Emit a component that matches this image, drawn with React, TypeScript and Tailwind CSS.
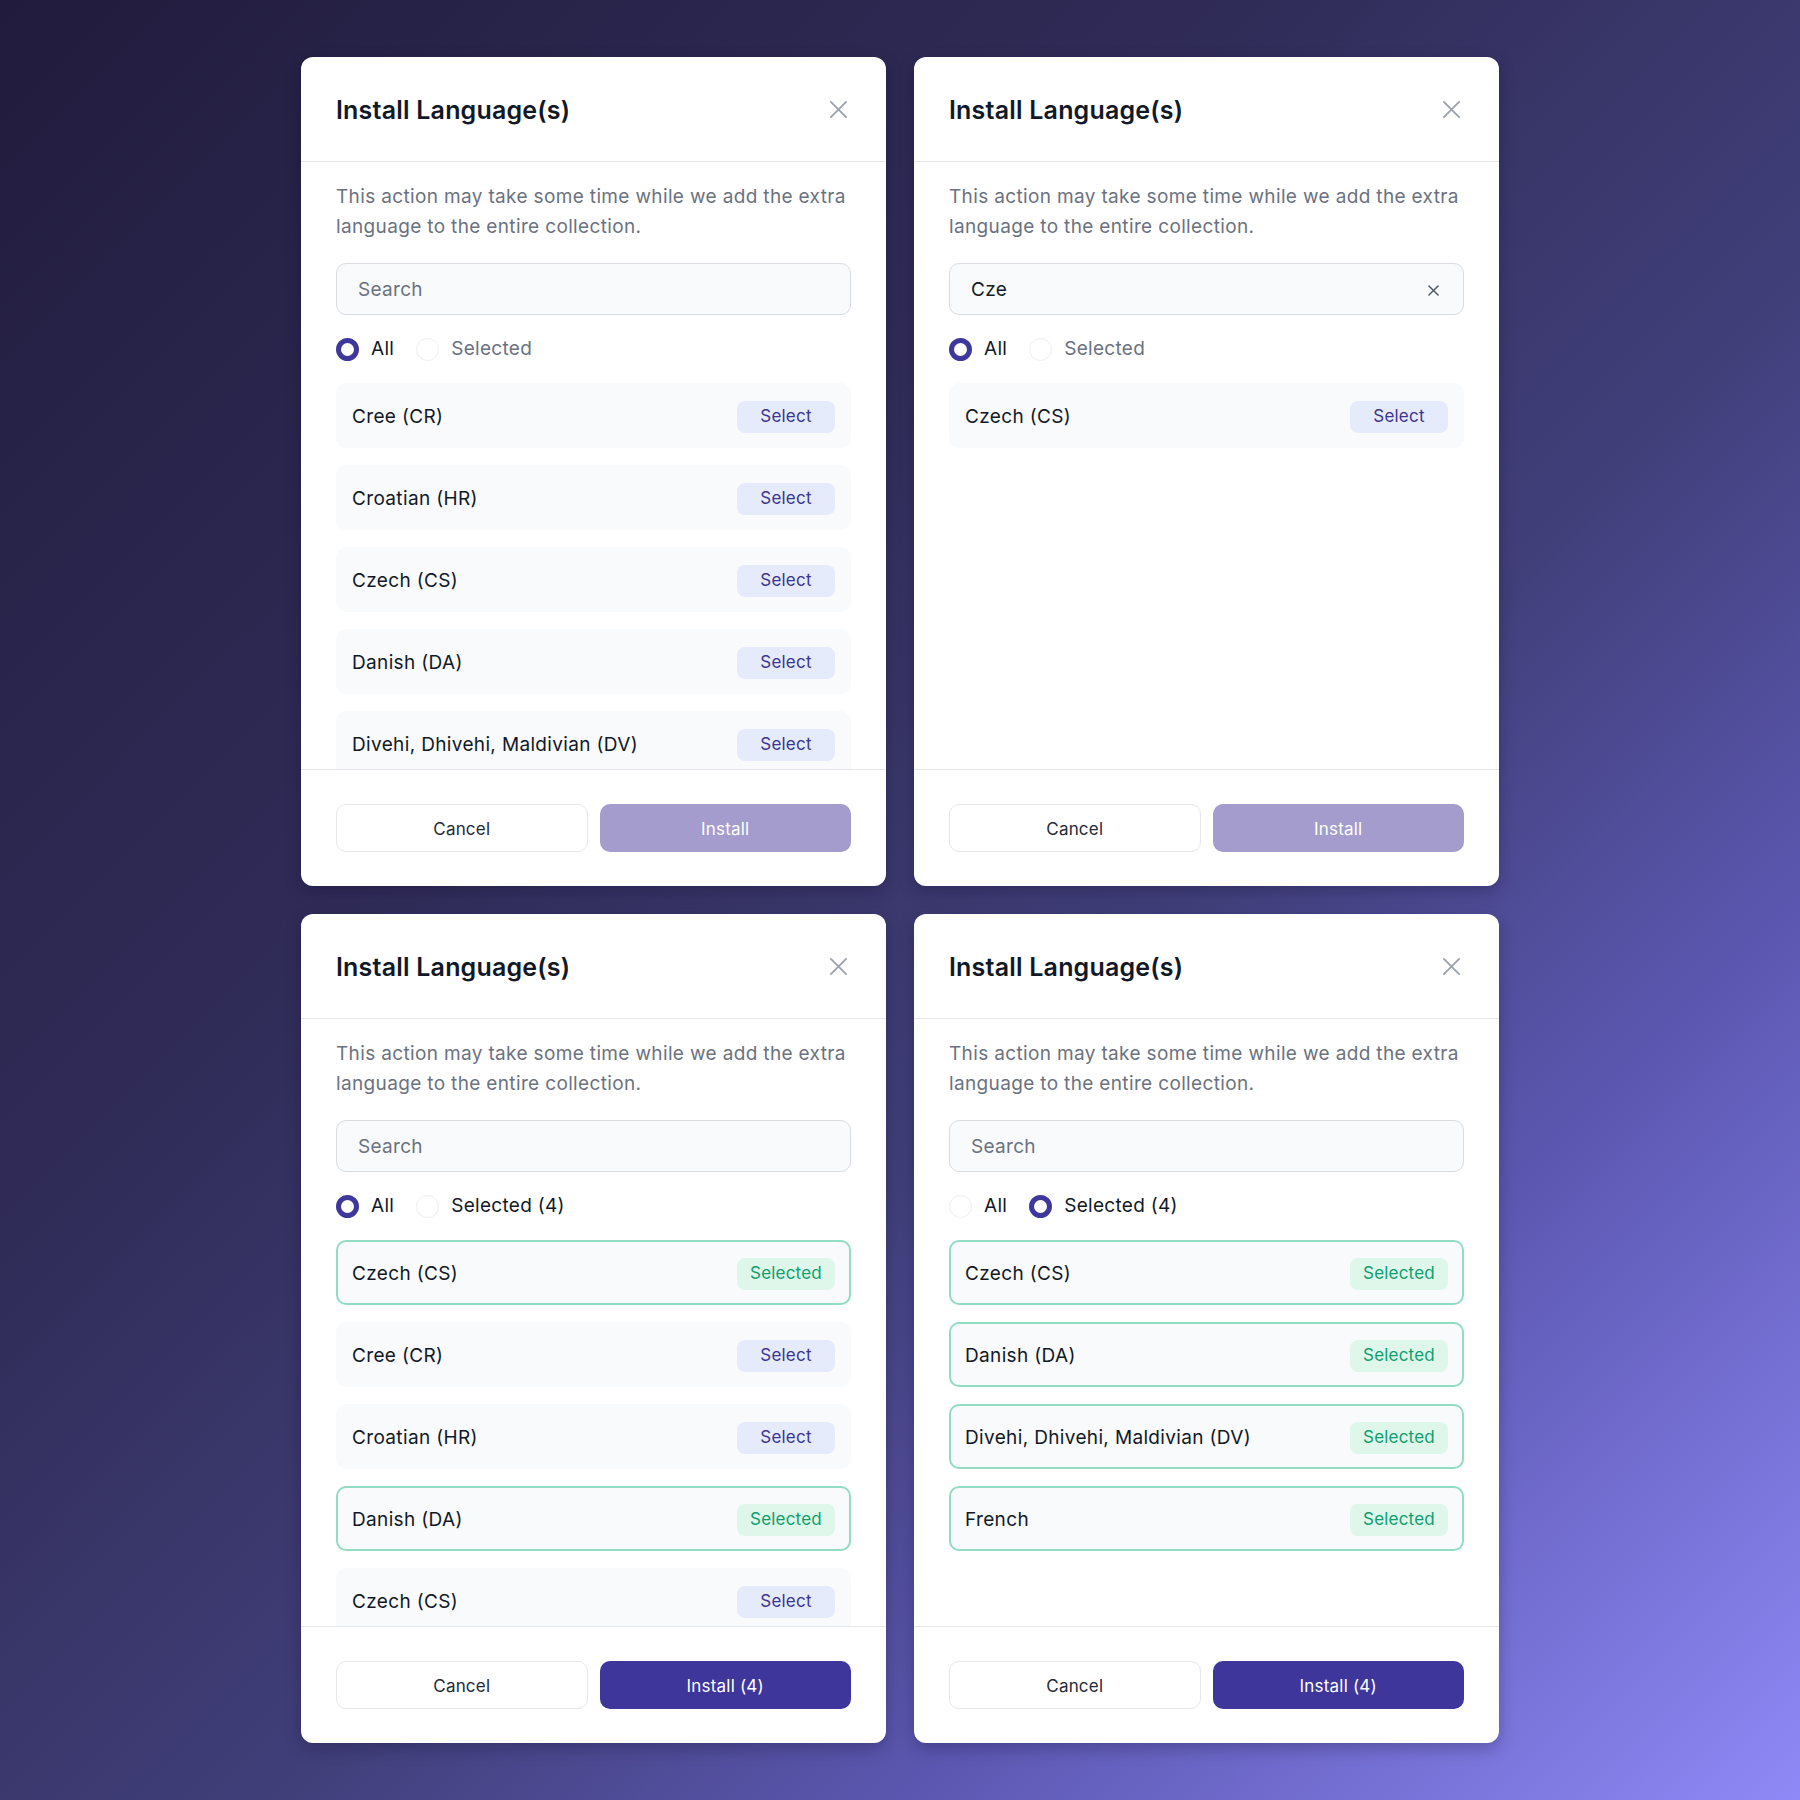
import React from "react";

type Item = { name: string; selected?: boolean };

function Radio({ checked, label, muted }: { checked: boolean; label: string; muted?: boolean }) {
  return (
    <div className="flex items-center gap-[12px]">
      {checked ? (
        <span className="w-[23px] h-[23px] rounded-full border-[5px] border-[#3f389c] bg-white" />
      ) : (
        <span className="w-[23px] h-[23px] rounded-full border border-[#eceef2] bg-white" />
      )}
      <span className={"text-[19px] leading-[24px] tracking-[0.3px] " + (muted ? "text-[#6b7280]" : "text-[#111827]")}>{label}</span>
    </div>
  );
}

function Row({ item }: { item: Item }) {
  return (
    <div
      className={
        "shrink-0 h-[65px] rounded-[10px] bg-[#f8fafc] border-2 px-[14px] pt-[3px] flex items-center justify-between " +
        (item.selected ? "border-[#92dcc2]" : "border-transparent")
      }
    >
      <span className="text-[19px] tracking-[0.35px] text-[#111827]">{item.name}</span>
      {item.selected ? (
        <span className="w-[98px] h-[32px] rounded-[8px] bg-[#def7ea] text-[#0f9f6e] text-[17px] tracking-[0.2px] flex items-center justify-center">
          Selected
        </span>
      ) : (
        <span className="w-[98px] h-[32px] rounded-[8px] bg-[#e6ebfc] text-[#3b358f] text-[17px] tracking-[0.2px] flex items-center justify-center">
          Select
        </span>
      )}
    </div>
  );
}

function Card({
  query,
  allChecked,
  selectedLabel,
  selectedMuted,
  items,
  installLabel,
  enabled,
}: {
  query?: string;
  allChecked: boolean;
  selectedLabel: string;
  selectedMuted: boolean;
  items: Item[];
  installLabel: string;
  enabled: boolean;
}) {
  return (
    <div className="h-[829px] rounded-[12px] bg-white flex flex-col overflow-hidden shadow-[0_6px_16px_rgba(10,8,40,0.25)]">
      <div className="h-[105px] shrink-0 border-b border-[#e5e7eb] pl-[35px] pr-[35px] pt-[3px] flex items-center justify-between">
        <h2 className="text-[25px] font-semibold text-[#111827] tracking-[0.2px]">Install Language(s)</h2>
        <button className="w-[26px] h-[26px] mb-[3px] flex items-center justify-center">
          <svg width="19" height="19" viewBox="0 0 20 20" fill="none" stroke="#9ca3af" strokeWidth="2" strokeLinecap="round">
            <path d="M2 2L18 18M18 2L2 18" />
          </svg>
        </button>
      </div>
      <div className="flex-1 min-h-0 flex flex-col px-[35px] pt-[20px]">
        <p className="text-[19px] leading-[30px] tracking-[0.35px] text-[#6b7280]">
          This action may take some time while we add the extra language to the entire collection.
        </p>
        <div className="mt-[21px] h-[52px] shrink-0 rounded-[10px] border border-[#d9dce1] bg-[#f9fafb] pl-[21px] pr-[24px] pt-[2px] flex items-center justify-between">
          {query ? (
            <>
              <span className="text-[19px] tracking-[0.3px] text-[#111827]">{query}</span>
              <svg width="11" height="11" viewBox="0 0 12 12" fill="none" stroke="#4b5563" strokeWidth="1.6" strokeLinecap="round">
                <path d="M1 1L11 11M11 1L1 11" />
              </svg>
            </>
          ) : (
            <span className="text-[19px] tracking-[0.3px] text-[#6b7280]">Search</span>
          )}
        </div>
        <div className="mt-[22px] h-[24px] shrink-0 flex items-center gap-[22px]">
          <Radio checked={allChecked} label="All" />
          <Radio checked={!allChecked} label={selectedLabel} muted={selectedMuted} />
        </div>
        <div className="mt-[22px] flex-1 min-h-0 overflow-hidden flex flex-col gap-[17px]">
          {items.map((it, i) => (
            <Row key={i} item={it} />
          ))}
        </div>
      </div>
      <div className="shrink-0 border-t border-[#e5e7eb] px-[35px] py-[34px] grid grid-cols-2 gap-[12px]">
        <button className="h-[48px] pt-[3px] rounded-[10px] border border-[#e5e7eb] bg-white text-[17px] tracking-[0.2px] text-[#1f2937]">
          Cancel
        </button>
        <button
          className={
            "h-[48px] pt-[3px] rounded-[10px] text-[17px] tracking-[0.2px] text-white " + (enabled ? "bg-[#3e369b]" : "bg-[#a39ccc]")
          }
        >
          {installLabel}
        </button>
      </div>
    </div>
  );
}

export default function App() {
  return (
    <div className="w-[1800px] h-[1800px] font-[Inter,sans-serif] bg-[linear-gradient(135deg,#211c3d_0%,#302c58_35%,#413f7a_58%,#5b57b0_75%,#8f89f7_100%)] grid grid-cols-[585px_585px] grid-rows-[829px_829px] gap-[28px] justify-center content-center">
      <Card
        allChecked
        selectedLabel="Selected"
        selectedMuted
        items={[
          { name: "Cree (CR)" },
          { name: "Croatian (HR)" },
          { name: "Czech (CS)" },
          { name: "Danish (DA)" },
          { name: "Divehi, Dhivehi, Maldivian (DV)" },
        ]}
        installLabel="Install"
        enabled={false}
      />
      <Card
        query="Cze"
        allChecked
        selectedLabel="Selected"
        selectedMuted
        items={[{ name: "Czech (CS)" }]}
        installLabel="Install"
        enabled={false}
      />
      <Card
        allChecked
        selectedLabel="Selected (4)"
        selectedMuted={false}
        items={[
          { name: "Czech (CS)", selected: true },
          { name: "Cree (CR)" },
          { name: "Croatian (HR)" },
          { name: "Danish (DA)", selected: true },
          { name: "Czech (CS)" },
        ]}
        installLabel="Install (4)"
        enabled
      />
      <Card
        allChecked={false}
        selectedLabel="Selected (4)"
        selectedMuted={false}
        items={[
          { name: "Czech (CS)", selected: true },
          { name: "Danish (DA)", selected: true },
          { name: "Divehi, Dhivehi, Maldivian (DV)", selected: true },
          { name: "French", selected: true },
        ]}
        installLabel="Install (4)"
        enabled
      />
    </div>
  );
}
